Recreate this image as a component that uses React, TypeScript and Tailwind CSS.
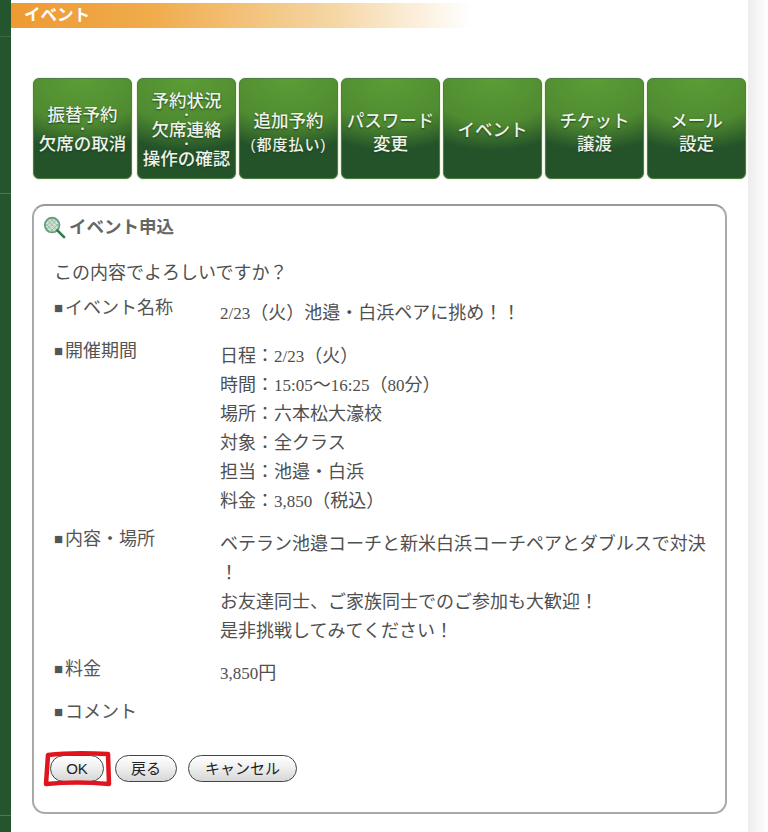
const sans = "font-['Liberation_Sans','Noto_Sans_CJK_JP',sans-serif]";
const serif = "font-['Liberation_Serif','Noto_Sans_CJK_JP',serif]";

const NAV = [
  { lines: ["振替予約", "・", "欠席の取消"] },
  { lines: ["予約状況", "・", "欠席連絡", "・", "操作の確認"] },
  { lines: ["追加予約", "(都度払い)"] },
  { lines: ["パスワード", "変更"] },
  { lines: ["イベント"] },
  { lines: ["チケット", "譲渡"] },
  { lines: ["メール", "設定"] },
];

function NavButton({ lines, className }: { lines: string[]; className?: string }) {
  return (
    <div className={`flex h-[101px] w-[99px] shrink-0 flex-col items-center justify-center rounded-[6px] border border-[#4d7f45] bg-[#24532a] bg-[radial-gradient(ellipse_110%_72%_at_50%_0%,#5c9d35_0%,#4f8b31_62%,#457d2e_72%,#24532a_100%)] text-[17.5px] font-medium text-[#eef2ea] shadow-[0_0_0_1px_#eef3e2] [text-shadow:0_1px_2px_#1c3f20] ${lines.length === 2 ? "pt-[8px]" : "pt-[3px]"} ${className ?? ""}`}>
      {lines.map((line, i) =>
        line === "・" ? (
          <span key={i} className="h-[6px] text-[10px] font-bold leading-[6px]">
            ・
          </span>
        ) : line.startsWith("(") ? (
          <span key={i} className="whitespace-nowrap text-[15px] leading-[23px] tracking-[1px]">
            {line}
          </span>
        ) : (
          <span key={i} className="whitespace-nowrap leading-[23px]">
            {line}
          </span>
        ),
      )}
    </div>
  );
}

function RacketIcon() {
  return (
    <svg width="23" height="23" viewBox="0 0 24 24" className="shrink-0">
      <ellipse cx="9.5" cy="9.5" rx="7.6" ry="7.6" fill="#cfe3d2" stroke="#6a9e80" strokeWidth="2" />
      <path d="M5 5l9 9M8 3l9 9M3 8l9 9M14 4l-10 10M17 7l-10 10M11 3l-8 8" stroke="#8fb89f" strokeWidth="0.9" fill="none" />
      <path d="M15 15l7 7" stroke="#2f7a52" strokeWidth="2.8" strokeLinecap="round" />
    </svg>
  );
}

// latin digits in the values run a little smaller than the kana around them
function L({ children }: { children: React.ReactNode }) {
  return <span className="text-[17px]">{children}</span>;
}

function Row({ label, children, className }: { label: string; children?: React.ReactNode; className?: string }) {
  return (
    <div className={`flex ${className ?? ""}`}>
      <div className="flex w-[166px] shrink-0 items-center self-start text-[18px] leading-[24px] text-[#555]">
        <span className="w-[11px] shrink-0 text-[15px] text-[#555]">■</span>
        {label}
      </div>
      <div className={`flex-1 whitespace-nowrap text-[18px] leading-[29px] text-[#4f4f4f] ${serif}`}>{children}</div>
    </div>
  );
}

function PillButton({ children, className }: { children: React.ReactNode; className?: string }) {
  return (
    <button className={`h-[27px] rounded-full border border-[#444] bg-[linear-gradient(to_bottom,#ffffff,#f2f2f2_40%,#d6d6d6)] text-[15px] leading-none text-[#222] ${className ?? ""}`}>
      {children}
    </button>
  );
}

export default function App() {
  return (
    <div className={`flex h-[832px] w-[768px] overflow-hidden bg-white ${sans}`}>
      {/* left stripe */}
      <div className="flex w-[11px] shrink-0 flex-col bg-[#24552c]">
        <div className="mt-[36px] h-px bg-[#3b6b42]" />
        <div className="mt-[156px] h-px bg-[#4b7a52]" />
        <div className="mt-[621px] h-px bg-[#4b7a52]" />
      </div>

      <div className="w-[737px] shrink-0">
        {/* title band */}
        <div className="mt-[3px] flex h-[25px] w-[460px] items-center bg-[linear-gradient(to_right,#ee9a33_0%,#f0ab4b_30%,#f5d6a4_70%,#ffffff_100%)] pl-[13px] text-[16.5px] font-bold text-white">
          イベント
        </div>

        {/* nav */}
        <div className="mt-[50px] flex gap-[3px] pl-[22px]">
          {NAV.map((item, i) => (
            <NavButton key={i} lines={item.lines} className={i === 0 ? "mr-[2px]" : ""} />
          ))}
        </div>

        {/* panel */}
        <div className="relative ml-[21px] mt-[25px] h-[610px] w-[695px] rounded-[13px] border-2 border-[#a9a9a9] border-t-[#999] bg-white">
          <div className="flex items-center gap-[3px] pl-[9px] pt-[8px] text-[17.5px] font-bold text-[#666]">
            <RacketIcon />
            イベント申込
          </div>

          <div className="pl-[20px] pr-[16px]">
            <div className="mt-[21px] text-[18px] leading-[24px] text-[#4f4f4f]">この内容でよろしいですか？</div>

            <Row label="イベント名称" className="mt-[11px]">
              <div className="pt-[3px]"><L>2/23</L>（火）池邉・白浜ペアに挑め！！</div>
            </Row>

            <Row label="開催期間" className="mt-[11px]">
              <div className="pt-[3px]">
                <div>日程：<L>2/23</L>（火）</div>
                <div>時間：<L>15:05</L>〜<L>16:25</L>（<L>80</L>分）</div>
                <div>場所：六本松大濠校</div>
                <div>対象：全クラス</div>
                <div>担当：池邉・白浜</div>
                <div>料金：<L>3,850</L>（税込）</div>
              </div>
            </Row>

            <Row label="内容・場所" className="mt-[11px]">
              <div className="pt-[3px]">
                <div>ベテラン池邉コーチと新米白浜コーチペアとダブルスで対決</div>
                <div>！</div>
                <div>お友達同士、ご家族同士でのご参加も大歓迎！</div>
                <div>是非挑戦してみてください！</div>
              </div>
            </Row>

            <Row label="料金" className="mt-[11px]">
              <div className="pt-[2px]"><L>3,850</L>円</div>
            </Row>

            <Row label="コメント" className="mt-[12px]" />
          </div>

          <div className="mt-[31px] flex gap-[11px] pl-[16px]">
            <PillButton className="w-[54px]">OK</PillButton>
            <PillButton className="w-[62px]">戻る</PillButton>
            <PillButton className="w-[109px]">キャンセル</PillButton>
          </div>

          {/* red marker over the OK button, drawn by hand in the screenshot */}
          <svg className="absolute left-[8px] top-[544px]" width="72" height="38" viewBox="0 0 72 38" fill="none">
            <path d="M4 34L6 5Q30 2 66 4L67 34Q35 31 4 34Z" stroke="#e1141e" strokeWidth="4.5" strokeLinejoin="round" />
          </svg>
        </div>
      </div>

      {/* right gutter */}
      <div className="flex-1 bg-[linear-gradient(to_right,#ececec,#f8f8f8_60%,#ffffff)]" />
    </div>
  );
}
